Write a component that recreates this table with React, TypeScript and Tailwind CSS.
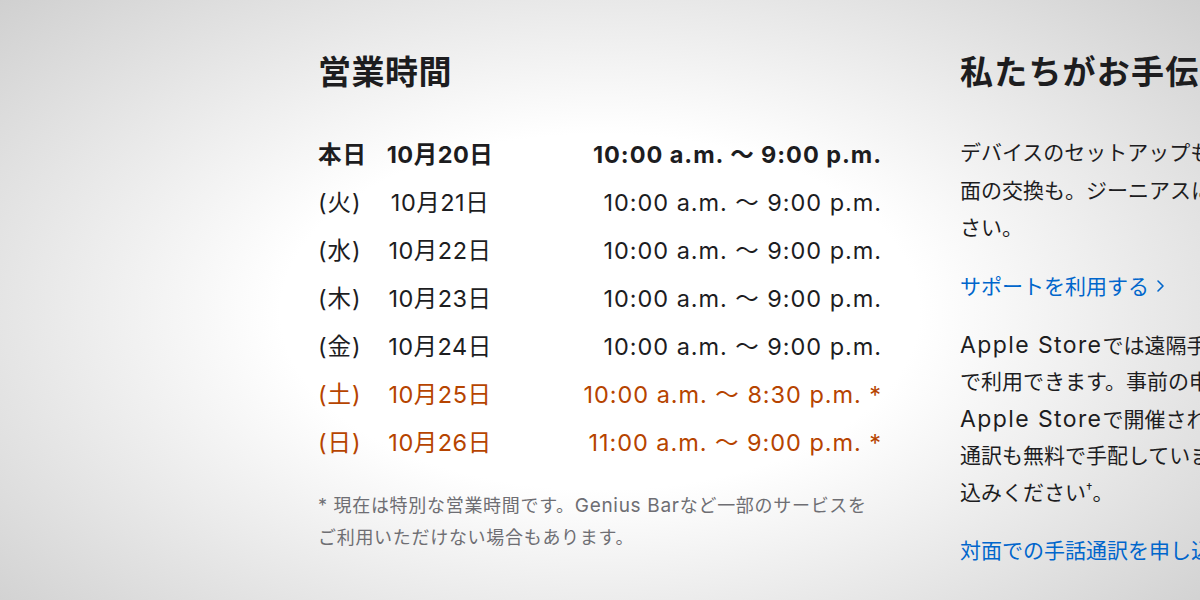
import React from "react";

const rows = [
  { day: "本日", date: "10月20日", time: "10:00 a.m. ～ 9:00 p.m.", bold: true, special: false },
  { day: "(火)", date: "10月21日", time: "10:00 a.m. ～ 9:00 p.m.", bold: false, special: false },
  { day: "(水)", date: "10月22日", time: "10:00 a.m. ～ 9:00 p.m.", bold: false, special: false },
  { day: "(木)", date: "10月23日", time: "10:00 a.m. ～ 9:00 p.m.", bold: false, special: false },
  { day: "(金)", date: "10月24日", time: "10:00 a.m. ～ 9:00 p.m.", bold: false, special: false },
  { day: "(土)", date: "10月25日", time: "10:00 a.m. ～ 8:30 p.m. *", bold: false, special: true },
  { day: "(日)", date: "10月26日", time: "11:00 a.m. ～ 9:00 p.m. *", bold: false, special: true },
];

function Chevron() {
  return (
    <svg width="9" height="14" viewBox="0 0 9 14" className="inline-block ml-[7px] mb-[3px]" fill="none">
      <path d="M2 2l5 5-5 5" stroke="#0066cc" strokeWidth="1.6" strokeLinecap="round" strokeLinejoin="round" />
    </svg>
  );
}

export default function App() {
  return (
    <div
      className="w-[1200px] h-[600px] overflow-hidden flex gap-[78px] pl-[318px] pt-[52px] text-[#1d1d1f] bg-[radial-gradient(ellipse_70%_78%_at_50%_52%,#ffffff_38%,#cecece_100%)]"
      style={{ fontFamily: 'Inter, "Noto Sans CJK JP", sans-serif' }}
    >
      <div className="w-[564px] shrink-0">
        <h2 className="text-[33px] leading-[40px] font-bold tracking-[0.5px]">営業時間</h2>
        <div className="mt-[39px] flex flex-col">
          {rows.map((r) => (
            <div
              key={r.date}
              className={
                "grid grid-cols-[62px_120px_1fr] h-[48px] items-center text-[23.5px] tracking-[0.5px] " +
                (r.bold ? "font-bold " : "font-normal ") +
                (r.special ? "text-[#b64400]" : "text-[#1d1d1f]")
              }
            >
              <span className="tracking-[1px]">{r.day}</span>
              <span className="text-center">{r.date}</span>
              <span className="text-right tracking-[0.95px]">{r.time}</span>
            </div>
          ))}
        </div>
        <p className="mt-[23px] text-[18px] leading-[32px] tracking-[0.7px] text-[#6e6e73] whitespace-nowrap">
          * 現在は特別な営業時間です。<span className="text-[19px]">Genius Bar</span>など一部のサービスを
          <br />
          ご利用いただけない場合もあります。
        </p>
      </div>
      <div className="w-[620px] shrink-0">
        <h2 className="text-[33px] leading-[40px] font-bold tracking-[1.2px] whitespace-nowrap">私たちがお手伝いします</h2>
        <p className="mt-[42px] text-[21px] leading-[37.5px] whitespace-nowrap">
          デバイスのセットアップも、バッテリーや画
          <br />
          面の交換も。ジーニアスにお任せくだ
          <br />
          さい。
        </p>
        <a className="block mt-[21px] text-[21px] leading-[37px] text-[#0066cc] whitespace-nowrap">
          サポートを利用する
          <Chevron />
        </a>
        <p className="mt-[22px] text-[21px] leading-[36.6px] whitespace-nowrap">
          <span className="text-[23px] tracking-[1.4px]">Apple Store</span>では遠隔手話通訳サービスを無料
          <br />
          で利用できます。事前の申し込みは不要です。
          <br />
          <span className="text-[23px] tracking-[1.4px]">Apple Store</span>で開催されるセッションでは、対面での手話
          <br />
          通訳も無料で手配していますので、お気軽にお申し
          <br />
          込みください<sup className="text-[13px]">†</sup>。
        </p>
        <a className="block mt-[21px] text-[21px] leading-[37px] text-[#0066cc] whitespace-nowrap">
          対面での手話通訳を申し込む
          <Chevron />
        </a>
      </div>
    </div>
  );
}
